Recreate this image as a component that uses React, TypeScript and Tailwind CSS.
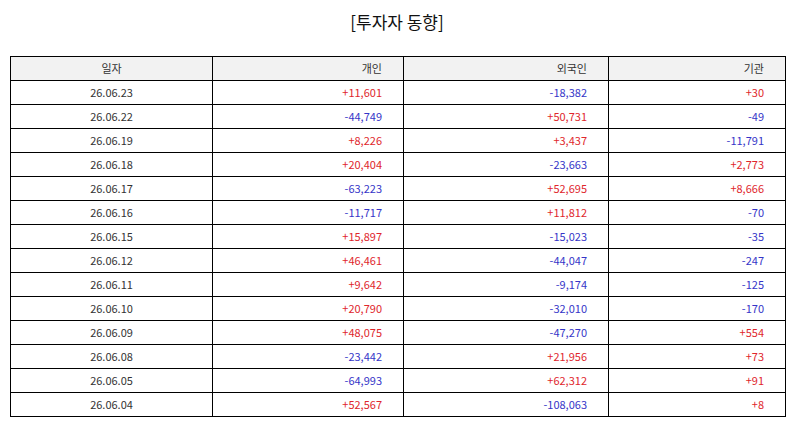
import React from 'react';

type Row = { date: string; indiv: string; foreign: string; inst: string };

const rows: Row[] = [
  { date: '26.06.23', indiv: '+11,601', foreign: '-18,382', inst: '+30' },
  { date: '26.06.22', indiv: '-44,749', foreign: '+50,731', inst: '-49' },
  { date: '26.06.19', indiv: '+8,226', foreign: '+3,437', inst: '-11,791' },
  { date: '26.06.18', indiv: '+20,404', foreign: '-23,663', inst: '+2,773' },
  { date: '26.06.17', indiv: '-63,223', foreign: '+52,695', inst: '+8,666' },
  { date: '26.06.16', indiv: '-11,717', foreign: '+11,812', inst: '-70' },
  { date: '26.06.15', indiv: '+15,897', foreign: '-15,023', inst: '-35' },
  { date: '26.06.12', indiv: '+46,461', foreign: '-44,047', inst: '-247' },
  { date: '26.06.11', indiv: '+9,642', foreign: '-9,174', inst: '-125' },
  { date: '26.06.10', indiv: '+20,790', foreign: '-32,010', inst: '-170' },
  { date: '26.06.09', indiv: '+48,075', foreign: '-47,270', inst: '+554' },
  { date: '26.06.08', indiv: '-23,442', foreign: '+21,956', inst: '+73' },
  { date: '26.06.05', indiv: '-64,993', foreign: '+62,312', inst: '+91' },
  { date: '26.06.04', indiv: '+52,567', foreign: '-108,063', inst: '+8' },
];

const tone = (v: string) => (v.startsWith('-') ? 'text-[#3535c8]' : 'text-[#e0262c]');

const Num = ({ v }: { v: string }) => (
  <td className={`h-[24px] border border-black pr-[21px] text-right ${tone(v)}`}>{v}</td>
);

const App: React.FC = () => {
  return (
    <div
      className="w-[794px] h-[425px] bg-white text-[#333]"
      style={{ fontFamily: '"Noto Sans CJK KR", "Noto Sans", sans-serif' }}
    >
      {/* Title */}
      <div className="h-[56px] pt-[9px] text-center text-[17px] leading-[26px] text-[#111]">[투자자 동향]</div>

      {/* Table */}
      <table className="ml-[10px] w-[775px] table-fixed border-collapse text-[11px] leading-none">
        <colgroup>
          <col className="w-[202px]" />
          <col className="w-[191px]" />
          <col className="w-[205px]" />
          <col className="w-[177px]" />
        </colgroup>
        <thead>
          <tr className="bg-[#f2f2f2]">
            <th className="h-[24px] border border-black text-center font-normal">일자</th>
            <th className="h-[24px] border border-black pr-[21px] text-right font-normal">개인</th>
            <th className="h-[24px] border border-black pr-[21px] text-right font-normal">외국인</th>
            <th className="h-[24px] border border-black pr-[21px] text-right font-normal">기관</th>
          </tr>
        </thead>
        <tbody>
          {rows.map((r) => (
            <tr key={r.date}>
              <td className="h-[24px] border border-black text-center">{r.date}</td>
              <Num v={r.indiv} />
              <Num v={r.foreign} />
              <Num v={r.inst} />
            </tr>
          ))}
        </tbody>
      </table>
    </div>
  );
};

export default App;
